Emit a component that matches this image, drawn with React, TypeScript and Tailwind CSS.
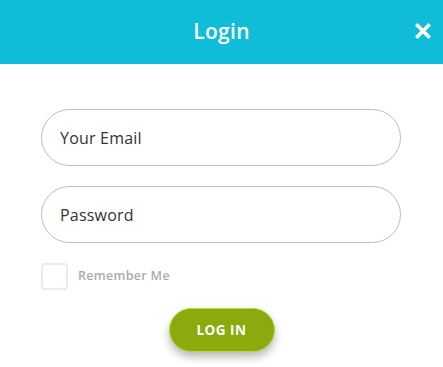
import React from "react";

const FONT = { fontFamily: '"Open Sans", "Noto Sans", sans-serif' };

export default function App() {
  return (
    <div className="w-[443px] h-[367px] bg-white overflow-hidden" style={FONT}>
      {/* Header */}
      <div className="relative flex h-16 items-center justify-center bg-[#0fbdd9]">
        <h1 className="text-[21px] font-semibold text-white tracking-[0.3px]">Login</h1>
        <button aria-label="Close" className="absolute right-[12px] top-[23px] flex h-4 w-4 items-center justify-center">
          <svg viewBox="0 0 16 16" className="h-4 w-4" fill="none" stroke="white" strokeWidth="3.6" strokeLinecap="square">
            <path d="M2.5 2.5 L13.5 13.5 M13.5 2.5 L2.5 13.5" />
          </svg>
        </button>
      </div>

      {/* Form */}
      <form className="flex flex-col px-[41px] pt-[45px]">
        <input
          type="email"
          placeholder="Your Email"
          className="h-[57px] w-[360px] rounded-full border border-[#bdbdbd] px-[18px] text-[16px] tracking-[0.2px] text-[#333] placeholder:text-[#333] outline-none"
        />
        <input
          type="password"
          placeholder="Password"
          className="mt-5 h-[57px] w-[360px] rounded-full border border-[#bdbdbd] px-[18px] text-[16px] tracking-[0.2px] text-[#333] placeholder:text-[#333] outline-none"
        />

        <label className="mt-5 flex items-center gap-[10px]">
          <span className="h-[27px] w-[27px] rounded-[4px] border-2 border-[#ebebeb] bg-white" />
          <span className="text-[12.5px] font-semibold tracking-[0.3px] text-[#ababab]">Remember Me</span>
        </label>

        <div className="mt-[18px] flex justify-center">
          <button
            type="button"
            className="h-[44px] w-[106px] rounded-full border border-[#a6e23c] bg-[#8caa0d] text-[13.5px] font-bold tracking-[0.5px] text-white shadow-[0_5px_9px_rgba(0,0,0,0.28)]"
          >
            LOG IN
          </button>
        </div>
      </form>
    </div>
  );
}
